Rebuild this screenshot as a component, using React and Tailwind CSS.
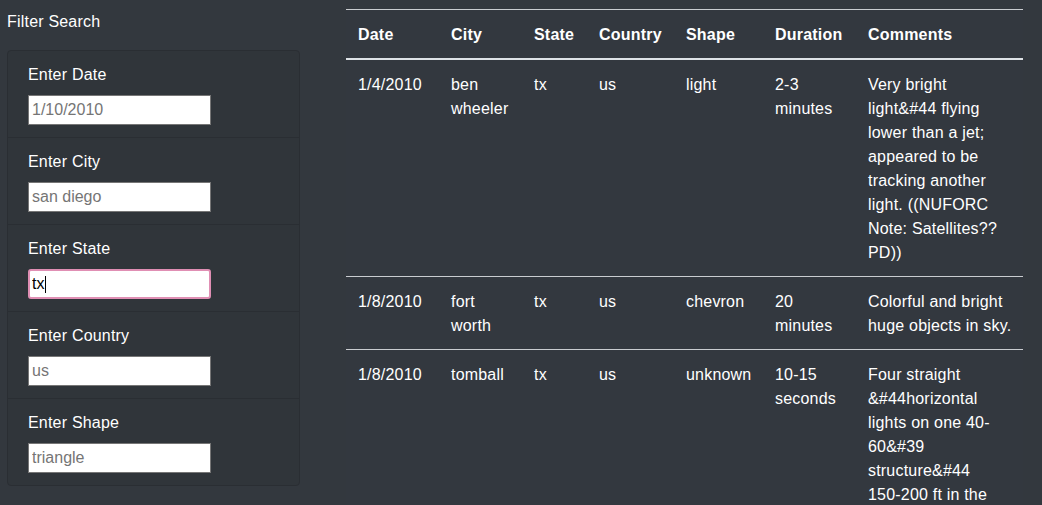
import React from "react";

const fields = [
  { label: "Enter Date", placeholder: "1/10/2010" },
  { label: "Enter City", placeholder: "san diego" },
  { label: "Enter State", value: "tx" },
  { label: "Enter Country", placeholder: "us" },
  { label: "Enter Shape", placeholder: "triangle" },
];

const rows = [
  [
    "1/4/2010", "ben wheeler", "tx", "us", "light", "2-3 minutes",
    ["Very bright", "light&#44 flying", "lower than a jet;", "appeared to be", "tracking another", "light. ((NUFORC", "Note: Satellites??", "PD))"],
  ],
  [
    "1/8/2010", "fort worth", "tx", "us", "chevron", "20 minutes",
    ["Colorful and bright", "huge objects in sky."],
  ],
  [
    "1/8/2010", "tomball", "tx", "us", "unknown", "10-15 seconds",
    ["Four straight", "&#44horizontal", "lights on one 40-", "60&#39", "structure&#44", "150-200 ft in the", "air. Moving slowly", "west to east."],
  ],
];

const heads = ["Date", "City", "State", "Country", "Shape", "Duration", "Comments"];

export default function App() {
  return (
    <div
      className="flex h-[505px] w-[1042px] overflow-hidden bg-[#33383e] text-white"
      style={{ fontFamily: '"Liberation Sans", Arial, sans-serif' }}
    >
      <div className="ml-[7px] w-[293px] shrink-0 pt-[10px]">
        <div className="text-[16px] leading-[24px] tracking-[0.2px]">Filter Search</div>
        <div className="mt-[16px] rounded-[4px] border border-[#2a2e33] bg-[#30353a]">
          {fields.map((f, i) => (
            <div
              key={f.label}
              className={
                "px-[20px] pt-[12px] pb-[12px] " +
                (i < fields.length - 1 ? "border-b border-[#2a2e33]" : "")
              }
            >
              <div className="mb-[8px] text-[16px] leading-[24px] tracking-[0.2px]">{f.label}</div>
              {f.value ? (
                <div className="relative h-[30px] w-[183px]">
                  <input
                    readOnly
                    value={f.value}
                    className="h-[30px] w-[183px] rounded-[3px] border-2 border-[#e08fb4] bg-white px-[2px] text-[16px] text-black outline-none"
                  />
                  <span className="absolute left-[17px] top-[7px] h-[17px] w-px bg-black" />
                </div>
              ) : (
                <input
                  readOnly
                  placeholder={f.placeholder}
                  className="h-[30px] w-[183px] border border-[#767676] bg-white px-[3px] text-[16px] text-black outline-none placeholder:text-[#757575]"
                />
              )}
            </div>
          ))}
        </div>
      </div>
      <div className="ml-[46px] pt-[9px]">
        <table className="w-[677px] table-fixed border-collapse bg-[#33383f] text-[16px] leading-[24px] tracking-[0.2px]">
          <colgroup>
            <col className="w-[93px]" />
            <col className="w-[83px]" />
            <col className="w-[65px]" />
            <col className="w-[87px]" />
            <col className="w-[89px]" />
            <col className="w-[93px]" />
            <col className="w-[167px]" />
          </colgroup>
          <thead>
            <tr className="border-t border-[#c9ccd0]">
              {heads.map((h) => (
                <th
                  key={h}
                  className="border-b-2 border-[#dee2e6] px-[12px] pt-[13px] pb-[11px] text-left align-bottom font-bold"
                >
                  {h}
                </th>
              ))}
            </tr>
          </thead>
          <tbody>
            {rows.map((r, i) => (
              <tr key={i} className={i > 0 ? "border-t border-[#c9ccd0]" : ""}>
                {r.map((c, j) => (
                  <td key={j} className="px-[12px] pt-[13px] pb-[11px] align-top">
                    {Array.isArray(c)
                      ? c.map((line, k) => (
                          <div key={k} className="whitespace-nowrap">
                            {line}
                          </div>
                        ))
                      : c}
                  </td>
                ))}
              </tr>
            ))}
          </tbody>
        </table>
      </div>
    </div>
  );
}
